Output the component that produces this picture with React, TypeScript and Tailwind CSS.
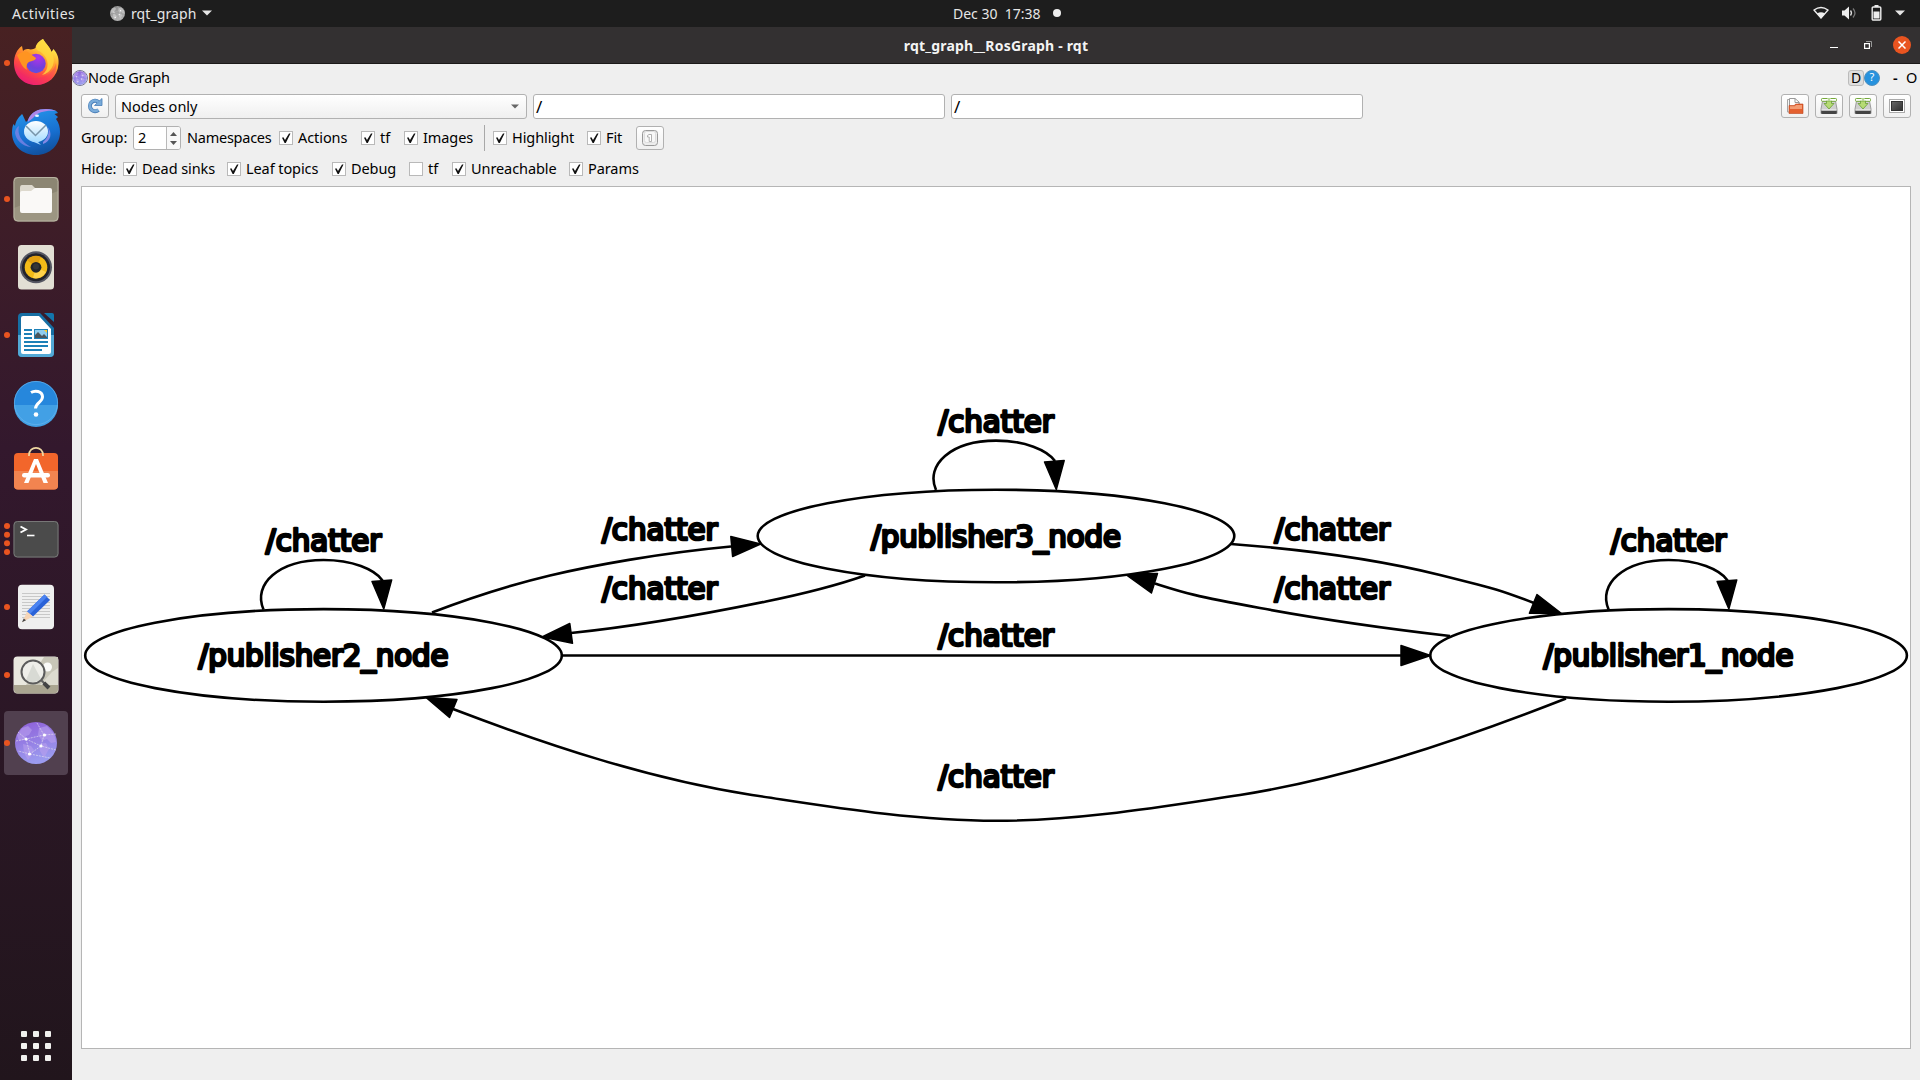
import React from "react";

const cell = "block h-[68px] w-[72px] shrink-0";

function Dots({ n = 1 }: { n?: number }) {
  const ys = n === 4 ? [21, 29.7, 38.3, 47] : [34];
  return (
    <>
      {ys.map((y) => (
        <circle key={y} cx="7" cy={y} r="3" fill="#e95420" />
      ))}
    </>
  );
}

function Firefox() {
  return (
    <svg className={cell} viewBox="0 0 72 68">
      <defs>
        <linearGradient id="ff1" x1="0.8" y1="0" x2="0.25" y2="1">
          <stop offset="0.1" stopColor="#fff44f" />
          <stop offset="0.4" stopColor="#ffa02c" />
          <stop offset="0.68" stopColor="#ff4a43" />
          <stop offset="1" stopColor="#e5127e" />
        </linearGradient>
        <radialGradient id="ff2" cx="0.6" cy="0.2" r="0.9">
          <stop offset="0" stopColor="#b035e8" />
          <stop offset="0.6" stopColor="#7040dc" />
          <stop offset="1" stopColor="#5a55e0" />
        </radialGradient>
      </defs>
      <Dots />
      <path d="M43 10C46 15 50 18 51.500 23L53.500 20C58 25 59 30 58.500 35C57.500 48 48 56 36 56C23 56 14 46.500 14 34C14 27 17 20 22 17L23 22C25 20 27 20 28.500 20C31 21 34 20 35.500 19C36 15 39 12 43 10Z" fill="url(#ff1)" />
      <path d="M43 10C46 15 50 18 52 24C57 34 51 44 42 46C50 40 49 30 42 24C39 21 37 23 36 18C37 14 40 12 43 10Z" fill="#ffd83f" opacity="0.8" />
      <circle cx="36" cy="34.500" r="9.700" fill="url(#ff2)" />
      <path d="M17 26C21 23 26 21 29 24L36 29C36 31 32 32 29 33C26 35 26 39 27.500 41C22 39 20 32 17 26Z" fill="#ff9421" />
      <path d="M15 35C19 47 29 51 38 49C47 48 54 42 56 34C58 48 47 56 36 56C24 56 15 47 15 35Z" fill="#f52a68" opacity="0.35" />
    </svg>
  );
}

function Thunderbird() {
  return (
    <svg className={cell} viewBox="0 0 72 68">
      <defs>
        <linearGradient id="tb1" x1="0.3" y1="0" x2="0.6" y2="1">
          <stop offset="0" stopColor="#2695ea" />
          <stop offset="0.6" stopColor="#176fd0" />
          <stop offset="1" stopColor="#104f9c" />
        </linearGradient>
        <linearGradient id="tb2" x1="0" y1="0" x2="0" y2="1">
          <stop offset="0" stopColor="#ffffff" />
          <stop offset="1" stopColor="#a5dcff" />
        </linearGradient>
      </defs>
      <path d="M28 23C31 15 38 12 46 12C52 12 56 13 58 16L54.500 17L58 20L56 22C59 26 60 30 60 35C60 48 50 58 36 58C22 58 12 48 12 36C12 32 12.500 29 13.500 27L15 29C16 23 19 20 22 17C23 18 24 21 26 25Z" fill="url(#tb1)" />
      <path d="M28 23C31 15 38 12 46 12C51 12 54 13 56 14C46 13 38 15 34 20C32 22 29 24 28 25Z" fill="#ab86e9" />
      <path d="M19 29C17 37 21 45 31 50C22 49 16 43 15 36C15 33 17 30 19 29Z" fill="#7c83e5" opacity="0.8" />
      <path d="M43 45C49 40 50 33 47 29C53 36 51 44 43 47Z" fill="#8289e5" />
      <ellipse cx="36" cy="34.500" rx="12" ry="10.500" fill="url(#tb2)" />
      <path d="M29 43L41 48L37 44Z" fill="#a7daff" />
      <path d="M26 29L35.500 38.500L46 28" fill="none" stroke="#7895a9" strokeWidth="1.500" />
      <ellipse cx="37" cy="18.800" rx="2" ry="1.200" fill="#e6f5ff" />
    </svg>
  );
}

function Files() {
  return (
    <svg className={cell} viewBox="0 0 72 68">
      <Dots />
      <rect x="13.500" y="12" width="45" height="44.500" rx="4" fill="#9c9682" />
      <path d="M18 12.500H54Q58 12.500 58 16.500V26L14 43V16.500Q14 12.500 18 12.500Z" fill="#8c8673" />
      <rect x="14" y="12.500" width="44" height="43.500" rx="4" fill="none" stroke="#b8b3a2" strokeWidth="1" />
      <path d="M20 23Q20 20 22 20H32L36 24H50V44H20Z" fill="#ddd9cd" />
      <path d="M20 28Q20 26 22 26H31L35 23H50Q52 23 52 25V46Q52 48 50 48H22Q20 48 20 46Z" fill="#faf9f7" />
    </svg>
  );
}

function Rhythmbox() {
  return (
    <svg className={cell} viewBox="0 0 72 68">
      <rect x="18" y="12" width="36" height="44.500" rx="3.500" fill="#e2dfd4" />
      <circle cx="36" cy="34.300" r="16" fill="#555762" />
      <circle cx="36" cy="34.300" r="14" fill="#22232b" />
      <circle cx="36" cy="34.300" r="11.300" fill="#f3bb18" />
      <path d="M36 34.300L27 27A11.300 11.300 0 0 1 41 24Z" fill="#e29f10" />
      <path d="M36 34.300L46 39A11.300 11.300 0 0 1 33 45Z" fill="#ffd34b" />
      <circle cx="36" cy="34.300" r="5.400" fill="#242529" />
      <circle cx="36" cy="33.500" r="3" fill="#353638" />
    </svg>
  );
}

function Writer() {
  return (
    <svg className={cell} viewBox="0 0 72 68">
      <Dots />
      <path d="M22 12H40L54 27V52Q54 56 50 56H22Q18 56 18 52V16Q18 12 22 12Z" fill="#166fa4" />
      <path d="M18 34H54V52Q54 56 50 56H22Q18 56 18 52Z" fill="#52a9d6" />
      <path d="M44 12H52Q54 12 54 14V21Z" fill="#1376ac" />
      <path d="M23 15H39L51 28V51Q51 53 49 53H23Q21 53 21 51V17Q21 15 23 15Z" fill="#fff" />
      <path d="M24 29H32M24 33H32M24 37H32M24 41H48M24 45H48M24 49H42" stroke="#1c80b7" strokeWidth="2" />
      <rect x="34" y="28" width="14" height="10" fill="#1c80b7" />
      <rect x="35" y="29" width="12" height="8" fill="#8ecdef" />
      <path d="M35 37V34L38 31L42 35L44 33L47 36V37Z" fill="#49565d" />
      <path d="M44 29H47V32Z" fill="#ffca28" />
    </svg>
  );
}

function Help() {
  return (
    <svg className={cell} viewBox="0 0 72 68">
      <circle cx="36" cy="34" r="22" fill="#2687dc" />
      <path d="M14 36A22 22 0 0 0 58 36Z" fill="#42a0e5" />
      <circle cx="36" cy="34" r="21.600" fill="none" stroke="#68b5ec" strokeWidth=".7" />
      <path d="M31 23.500C35 21 42 22 42.500 27.500C43 33 35.500 33.500 35.500 39.500" fill="none" stroke="#fff" strokeWidth="3" />
      <circle cx="36" cy="45.500" r="2.300" fill="#fff" />
    </svg>
  );
}

function Store() {
  return (
    <svg className={cell} viewBox="0 0 72 68">
      <rect x="14" y="16" width="44" height="36.500" rx="4" fill="#f2662b" />
      <path d="M14 34H58V48.500Q58 52.500 54 52.500H18Q14 52.500 14 48.500Z" fill="#f28450" />
      <path d="M29 19V18C29 8.500 43 8.500 43 18V19" fill="none" stroke="#efd8a1" strokeWidth="1.700" />
      <path d="M34 22H38L48 46H43.500L36 27L28.500 46H24Z" fill="#fff" />
      <rect x="22" y="36" width="28" height="4.500" rx="2.200" fill="#fff" />
    </svg>
  );
}

function Terminal() {
  return (
    <svg className={cell} viewBox="0 0 72 68">
      <Dots n={4} />
      <rect x="13.500" y="16" width="45" height="36.500" rx="4" fill="#4b4b4b" />
      <rect x="14" y="16.500" width="44" height="35.500" rx="3.500" fill="none" stroke="#777" strokeWidth="1" />
      <path d="M20.500 21.500L26 24.500L20.500 27.500" fill="none" stroke="#fff" strokeWidth="1.900" />
      <path d="M27 30.500H34.500" stroke="#fff" strokeWidth="1.600" />
    </svg>
  );
}

function Editor() {
  return (
    <svg className={cell} viewBox="0 0 72 68">
      <Dots />
      <rect x="18" y="11.800" width="36" height="44.500" rx="4" fill="#efefef" />
      <path d="M22 20.500H50M22 23.500H50M22 26.500H50M22 29.500H50M22 32.500H50M22 35.500H50M22 38.500H50M22 41.500H50M22 44.500H50" stroke="#c8c8c8" strokeWidth="1" />
      <path d="M44.500 21.500L50 27L33 43.500L27 38.500Z" fill="#2a62d8" />
      <path d="M44.500 21.500L47 24L30 41L27 38.500Z" fill="#4b83f1" />
      <path d="M27 38.500L33 43.500L22.500 49Z" fill="#f6d5b6" />
      <path d="M23.700 45.500L26 47.200L22 49.300Z" fill="#444" />
    </svg>
  );
}

function Viewer() {
  return (
    <svg className={cell} viewBox="0 0 72 68">
      <Dots />
      <rect x="13.500" y="15.500" width="45" height="37" rx="4" fill="#e9e8df" />
      <path d="M44 16H58V44H26Z" fill="#c8c6b8" />
      <path d="M52 31L58 27V44H40Z" fill="#dddbd0" />
      <path d="M14 44H58V48.500Q58 52.500 54 52.500H18Q14 52.500 14 48.500Z" fill="#aaa591" />
      <circle cx="47.500" cy="26" r="4.500" fill="#fafaf8" />
      <circle cx="33" cy="31" r="11.500" fill="#eeeee9" />
      <path d="M26 39L33 23L41 38Q34 44 26 39Z" fill="#d8dad4" />
      <circle cx="33" cy="31" r="11.500" fill="none" stroke="#5b5b5b" strokeWidth="2" />
      <path d="M41.500 39.500L44.500 42.500" stroke="#606060" strokeWidth="2" />
      <path d="M43.800 41.800L49 47" stroke="#444" strokeWidth="4" />
    </svg>
  );
}

function Globe({ className, gray = false }: { className: string; gray?: boolean }) {
  const id = gray ? "glg" : "glp";
  return (
    <svg className={className} viewBox="0 0 42 42">
      <defs>
        <linearGradient id={id} x1="0" y1="0" x2="0.3" y2="1">
          <stop offset="0" stopColor={gray ? "#8c8c8c" : "#8e5ed8"} />
          <stop offset="1" stopColor={gray ? "#b0b0b0" : "#9b9bef"} />
        </linearGradient>
      </defs>
      <circle cx="21" cy="21" r="21" fill={`url(#${id})`} />
      <g fill={gray ? "#d2d2d2" : "#b9a0ee"} opacity="0.6">
        <path d="M2 13L7 6L13 4L17 8L14 13L11 14L9 18L4 19Z" />
        <path d="M8 22L16 24L19 28L16 34L13 38L9 31Z" />
        <path d="M24 6L32 4L39 12L41 20L36 21L32 17L27 19L23 13Z" />
        <path d="M24 22L31 21L34 27L29 36L25 29Z" />
      </g>
      <path d="M1 19L11 17L29 13L41 12M11 17L26 24L41 28M11 17L15 32L26 24L29 13M15 32L3 29M15 32L35 36M11 17L3 10M29 13L22 1" fill="none" stroke="#eee" strokeWidth="0.700" strokeDasharray="2 1" opacity="0.8" />
      <g fill="#fff">
        <circle cx="11" cy="17" r="1.600" />
        <circle cx="29.500" cy="13" r="1.600" />
        <circle cx="26" cy="24" r="1.600" />
        <circle cx="14.500" cy="32" r="1.600" />
      </g>
    </svg>
  );
}

function Dock() {
  return (
    <aside className="flex w-[72px] shrink-0 flex-col bg-linear-to-b from-[#482122] via-[#33182d] via-40% to-[#21151c] pt-[2px]">
      <Firefox />
      <Thunderbird />
      <Files />
      <Rhythmbox />
      <Writer />
      <Help />
      <Store />
      <Terminal />
      <Editor />
      <Viewer />
      <div className="flex h-[68px] shrink-0 items-center justify-center">
        <div className="flex h-16 w-16 items-center rounded bg-[#51404f]">
          <span className="h-[6px] w-[6px] rounded-full bg-[#e95420]" />
          <Globe className="ml-[5px] h-[42px] w-[42px]" />
        </div>
      </div>
      <div className="mt-auto mb-[19px] ml-[21px] grid w-[30px] grid-cols-3 gap-[6px]">
        {Array.from({ length: 9 }, (_, i) => (
          <span key={i} className="h-[6px] w-[6px] rounded-[1px] bg-[#f1f0ee]" />
        ))}
      </div>
    </aside>
  );
}

function TopBar() {
  return (
    <header className="flex h-[27px] shrink-0 items-center bg-[#1d1d1d] pb-px text-[14px] text-[#e6e6e6]">
      <div className="flex h-full w-[640px] items-center">
        <span className="ml-3 w-[98px] tracking-[0.5px]">Activities</span>
        <Globe gray className="h-[15px] w-[15px]" />
        <span className="ml-[6px] w-[71px] tracking-[0.1px]">rqt_graph</span>
        <svg className="h-[6px] w-[10px]" viewBox="0 0 10 6">
          <path d="M0 .500H10L5 5.500Z" fill="#e6e6e6" />
        </svg>
      </div>
      <div className="flex h-full flex-1 items-center justify-center whitespace-pre pl-[47px] pr-[3px]">
        <span className="w-[100px] tracking-[0px]">Dec 30  17:38</span>
        <span className="h-2 w-2 rounded-full bg-[#eee]" />
      </div>
      <div className="flex h-full w-[590px] items-center justify-end pr-[15px]">
        <svg className="h-[14px] w-[16px]" viewBox="0 0 16 14">
          <path d="M1 4Q8-1 15 4L8 12Z" fill="none" stroke="#eee" strokeWidth="1.300" />
          <path d="M4 7.500Q8 5 12 7.500L8 12.500Z" fill="#eee" />
        </svg>
        <svg className="ml-3 h-[14px] w-[16px]" viewBox="0 0 16 14">
          <path d="M1 4.500H3.500L8 .500V13.500L3.500 9.500H1Z" fill="#eee" />
          <path d="M9.500 4.500Q11.500 7 9.500 9.500" fill="none" stroke="#ddd" strokeWidth="1.300" />
          <path d="M12 2.500Q16 7 12 11.500" fill="none" stroke="#777" strokeWidth="1.300" />
        </svg>
        <svg className="ml-[14px] h-[16px] w-[11px]" viewBox="0 0 11 16">
          <path d="M3.500 0H7.500V2H3.500Z" fill="#eee" />
          <rect x="1.200" y="2" width="8.600" height="13" rx="1" fill="none" stroke="#eee" strokeWidth="1.400" />
          <path d="M2.500 6.500H8.500V13.500H2.500Z" fill="#eee" />
        </svg>
        <svg className="ml-[13px] h-[6px] w-[10px]" viewBox="0 0 10 6">
          <path d="M0 .500H10L5 5.500Z" fill="#e6e6e6" />
        </svg>
      </div>
    </header>
  );
}

function TitleBar() {
  return (
    <div className="flex h-[37px] shrink-0 items-center border-b border-[#1b1919] bg-[#333031]">
      <div className="w-[190px]" />
      <div className="flex-1 text-center text-[14px] font-bold tracking-[0.200px] text-[#f4f4f4]">rqt_graph__RosGraph - rqt</div>
      <div className="flex h-full w-[190px] items-center justify-end pr-[9px]">
        <svg className="h-[18px] w-2" viewBox="0 0 8 18">
          <path d="M0 11.500H8" stroke="#fff" strokeWidth="1" />
        </svg>
        <svg className="ml-[26px] h-2 w-2" viewBox="0 0 8 8">
          <path d="M2 .500H7.500V6" fill="none" stroke="#999" strokeWidth="1" />
          <rect x=".600" y="2.600" width="4.800" height="4.800" fill="none" stroke="#fff" strokeWidth="1.200" />
        </svg>
        <span className="ml-[21px] flex h-[18px] w-[18px] items-center justify-center rounded-full bg-[#e95420]">
          <svg className="h-2 w-2" viewBox="0 0 8 8">
            <path d="M.500 .500L7.500 7.500M7.500 .500L.500 7.500" stroke="#fff" strokeWidth="1.500" />
          </svg>
        </span>
      </div>
    </div>
  );
}

const tool =
  "flex h-6 w-7 shrink-0 items-center justify-center rounded-[3px] border border-[#b1b1b1] bg-linear-to-b from-white to-[#f0f0f0]";

function Check({ label, on = true, width }: { label: string; on?: boolean; width: string }) {
  return (
    <label className={`flex shrink-0 items-center ${width}`}>
      <span className="flex h-[14px] w-[14px] shrink-0 items-center justify-center border border-[#b9b9b9] bg-white">
        {on && (
          <svg className="h-[11px] w-[10px]" viewBox="0 0 10 11">
            <path d="M1 4.800L2.400 4.200L4 7L8 .500L9.500 .500L4.800 10H3.600Z" fill="#111" />
          </svg>
        )}
      </span>
      <span className="ml-[5px] whitespace-nowrap tracking-[-0.080px]">{label}</span>
    </label>
  );
}

function SaveIcon() {
  return (
    <svg className="h-[18px] w-[18px] shrink-0" viewBox="0 0 18 18">
      <path d="M2.500 4H15.500L17 12V16.500H1V12Z" fill="#cfcfcf" stroke="#8a8a8a" strokeWidth=".8" />
      <path d="M1.200 13.500H16.800V15.500Q16.800 17 15.300 17H2.700Q1.200 17 1.200 15.500Z" fill="#444" />
      <path d="M1.500 13H16.500" stroke="#f2f2f2" strokeWidth="1" />
      <rect x="1.500" y="1.500" width="15" height="2.800" rx=".8" fill="#fff" stroke="#75a93b" strokeWidth="1" />
      <path d="M6.500 4H11.500V6.500H14L9 12L4 6.500H6.500Z" fill="#b6db75" stroke="#699e35" strokeWidth=".8" />
      <path d="M7.500 1H10.500V4H7.500Z" fill="#e6f2d4" />
      <path d="M9 1V4" stroke="#75a93b" strokeWidth=".8" />
    </svg>
  );
}

function Controls() {
  return (
    <div className="flex h-[122px] shrink-0 flex-col text-[14.500px] text-[#000]">
      <div className="flex h-[27px] shrink-0 items-center pr-[2px]">
        <Globe className="h-4 w-4 rounded-full border border-[#777795]" />
        <span className="flex-1 tracking-[-0.100px]">Node Graph</span>
        <span className="flex h-4 w-4 items-center justify-center rounded-[3px] border border-[#bbb] bg-[#dedede] text-[14px]">D</span>
        <span className="flex h-4 w-4 items-center justify-center rounded-full border border-[#4f91c0] bg-[#2692de] text-[11px] text-white">?</span>
        <span className="ml-[13px] w-[13px] font-semibold">-</span>
        <span className="w-[12px]">O</span>
      </div>
      <div className="mt-[3px] flex h-[25px] shrink-0 items-start gap-[6px] pr-[9px] pl-[9px]">
        <button className={tool}>
          <svg className="h-[18px] w-[18px]" viewBox="0 0 18 18">
            <path d="M12.500 5A5.200 5.200 0 1 0 12.500 13" fill="none" stroke="#487db7" strokeWidth="4" />
            <path d="M16 1.500V8.500H8.500Z" fill="#79abd9" stroke="#487db7" strokeWidth=".8" />
            <path d="M12.500 5A5.200 5.200 0 1 0 12.300 12.800" fill="none" stroke="#79abd9" strokeWidth="2.600" />
          </svg>
        </button>
        <div className="flex h-[25px] w-[412px] shrink-0 items-center justify-between rounded-[3px] border border-[#b1b1b1] bg-linear-to-b from-white to-[#efefef] pr-[7px] pl-[5px]">
          <span>Nodes only</span>
          <svg className="h-[5px] w-2" viewBox="0 0 8 5">
            <path d="M0 .500H8L4 4.500Z" fill="#666" />
          </svg>
        </div>
        <div className="flex h-[25px] w-[412px] shrink-0 items-center rounded-[3px] border border-[#b1b1b1] bg-white pt-px pl-[2px] text-[17px]">/</div>
        <div className="flex h-[25px] w-[412px] shrink-0 items-center rounded-[3px] border border-[#b1b1b1] bg-white pt-px pl-[2px] text-[17px]">/</div>
        <div className="ml-auto flex gap-[6px]">
          <button className={tool}>
            <svg className="h-[18px] w-[18px]" viewBox="0 0 18 18">
              <path d="M1.500 2.500H8V5H13V15H1.500Z" fill="#f6f6f6" stroke="#a5a5a5" strokeWidth="1" />
              <path d="M3.500 1.500H9L13 5V10H3.500Z" fill="#fff" stroke="#999" strokeWidth="1" />
              <path d="M9 1.500V5.500H13" fill="none" stroke="#999" strokeWidth="1" />
              <path d="M3 16.500V8.500H8.500L9.500 7H17V16.500Z" fill="#e4602f" stroke="#bd451d" strokeWidth=".6" />
              <path d="M4 9.300H9L10 8H16V12H4Z" fill="#f39c73" />
            </svg>
          </button>
          <button className={tool}>
            <SaveIcon />
          </button>
          <button className={tool}>
            <SaveIcon />
          </button>
          <button className={tool}>
            <span className="flex h-[14px] w-[16px] border border-[#aaa] bg-white p-px">
              <span className="flex-1 border border-[#333] bg-linear-to-br from-[#666] to-[#333]" />
            </span>
          </button>
        </div>
      </div>
      <div className="mt-[6px] flex h-[26px] shrink-0 items-center pl-[9px]">
        <span className="w-[52px] tracking-[-0.100px]">Group:</span>
        <div className="flex h-6 w-12 shrink-0 overflow-hidden rounded-[3px] border border-[#b1b1b1] bg-white">
          <span className="flex flex-1 items-center pl-[4px]">2</span>
          <span className="flex w-[14px] flex-col items-center justify-center gap-[5px] border-l border-[#b9b9b9] bg-[#f8f8f8]">
            <svg className="h-1 w-[7px]" viewBox="0 0 7 4">
              <path d="M0 4H7L3.500 0Z" fill="#555" />
            </svg>
            <svg className="h-1 w-[7px]" viewBox="0 0 7 4">
              <path d="M0 0H7L3.500 4Z" fill="#555" />
            </svg>
          </span>
        </div>
        <span className="ml-[6px] w-[92px] tracking-[-0.250px]">Namespaces</span>
        <Check label="Actions" width="w-[82px]" />
        <Check label="tf" width="w-[43px]" />
        <Check label="Images" width="w-[80px]" />
        <span className="mr-[8px] h-[26px] w-px bg-[#a8a8a8]" />
        <Check label="Highlight" width="w-[94px]" />
        <Check label="Fit" width="w-[49px]" />
        <button className={tool}>
          <svg className="h-4 w-4" viewBox="0 0 16 16">
            <rect x=".500" y=".500" width="15" height="15" rx="3" fill="#ededed" stroke="#999" />
            <rect x="2.500" y="1.500" width="11" height="11" rx="2" fill="#f8f8f8" stroke="#ddd" />
            <path d="M5.500 5.500L7 4.500H9.500V11.500H7.200V7H5.500Z" fill="#fff" stroke="#a8a8a8" strokeWidth=".9" />
          </svg>
        </button>
      </div>
      <div className="mt-[5px] flex h-[26px] shrink-0 items-center pl-[9px]">
        <span className="w-[42px]">Hide:</span>
        <Check label="Dead sinks" width="w-[104px]" />
        <Check label="Leaf topics" width="w-[105px]" />
        <Check label="Debug" width="w-[77px]" />
        <Check label="tf" on={false} width="w-[43px]" />
        <Check label="Unreachable" width="w-[117px]" />
        <Check label="Params" width="w-[80px]" />
      </div>
    </div>
  );
}

const nodes = [
  { name: "/publisher2_node", x: 323.5, y: 655.4 },
  { name: "/publisher3_node", x: 996, y: 536 },
  { name: "/publisher1_node", x: 1668.6, y: 655.4 },
];

const labels = [
  [659.7, 540.3],
  [659.7, 598.6],
  [1332.3, 540.3],
  [1332.3, 598.6],
  [996, 646.4],
  [996, 786.9],
];

const edges = [
  "M432 612.5C470 598 510 585 550 575.5S660 553 731 546.5",
  "M865 575.5C835 586 805 593.5 766 601.5S640 626 571 633",
  "M1231 544C1310 550 1380 560 1440 575S1500 590 1534 603",
  "M1450 636C1390 629 1330 621 1260 608S1185 593 1155 583.5",
  "M562 655.5H1401",
  "M1566 698.5C1450 744 1342 779 1240 795C1172 805 1082 820.8 996 820.8C910 820.8 820 805 752 795C650 779 550 746 453 709",
];

const heads = [
  "M760.600 544L730.800 536.500L732.600 556.500Z",
  "M542 637L569.800 623.500L572.500 643.300Z",
  "M1561.500 613.500L1537 594.500L1529.400 613.200Z",
  "M1125 574L1157.500 573.500L1151.400 593Z",
  "M1430.500 655.500L1401 645.500V665.500Z",
  "M426 697.500L457 699.500L449.500 717.500Z",
];

function Graph() {
  return (
    <svg className="block h-full w-full" viewBox="82 187 1828 861" fontFamily="'DejaVu Sans'" fontSize="29.300" textAnchor="middle" strokeLinejoin="round">
      <g fill="none" stroke="#000" strokeWidth="2.600">
        {edges.map((d) => (
          <path key={d} d={d} />
        ))}
      </g>
      <g stroke="#000" strokeWidth="1.500">
        {heads.map((d) => (
          <path key={d} d={d} />
        ))}
      </g>
      {nodes.map((n) => (
        <g key={n.name} transform={`translate(${n.x} ${n.y})`} stroke="#000">
          <path d="M-60 -46C-71 -71 -45 -95.400 0 -95.400C29 -95.400 51 -86 59 -75" fill="none" strokeWidth="2.600" />
          <path d="M60.300 -46.500L48.500 -74L68.200 -75.500Z" strokeWidth="1.500" />
          <ellipse rx="238.300" ry="46.300" fill="#fff" strokeWidth="2.600" />
          <text y="11" strokeWidth="2.700" textLength="250">{n.name}</text>
          <text y="-104.300" strokeWidth="2.700" textLength="115.500">/chatter</text>
        </g>
      ))}
      {labels.map(([x, y]) => (
        <text key={`${x}-${y}`} x={x} y={y} stroke="#000" strokeWidth="2.700" textLength="115.500">
          /chatter
        </text>
      ))}
    </svg>
  );
}

export default function App() {
  return (
    <div className="flex h-[1080px] w-[1920px] flex-col overflow-hidden bg-[#efefef] font-['Noto_Sans','Open_Sans',sans-serif]">
      <TopBar />
      <div className="flex min-h-0 flex-1">
        <Dock />
        <main className="flex min-w-0 flex-1 flex-col">
          <TitleBar />
          <Controls />
          <div className="mr-[9px] mb-[31px] ml-[9px] min-h-0 flex-1 border border-[#b5b5b5] bg-white">
            <Graph />
          </div>
        </main>
      </div>
    </div>
  );
}
